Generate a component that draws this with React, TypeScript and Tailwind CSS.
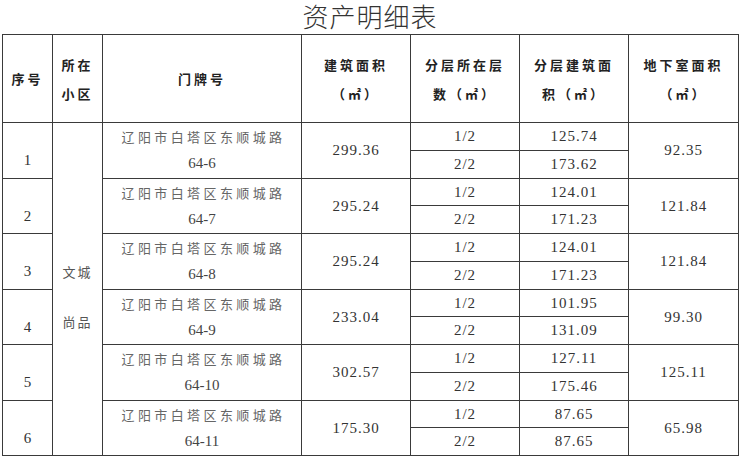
import React from 'react';

const rows = [
  { no: '1', door: '64-6', area: '299.36', f1: '125.74', f2: '173.62', base: '92.35' },
  { no: '2', door: '64-7', area: '295.24', f1: '124.01', f2: '171.23', base: '121.84' },
  { no: '3', door: '64-8', area: '295.24', f1: '124.01', f2: '171.23', base: '121.84' },
  { no: '4', door: '64-9', area: '233.04', f1: '101.95', f2: '131.09', base: '99.30' },
  { no: '5', door: '64-10', area: '302.57', f1: '127.11', f2: '175.46', base: '125.11' },
  { no: '6', door: '64-11', area: '175.30', f1: '87.65', f2: '87.65', base: '65.98' },
];

const cjk = '"Noto Sans CJK SC", sans-serif';
const num = '"Liberation Serif", "Noto Sans CJK SC", serif';

export default function App() {
  const cell = 'border border-[#3a3a3a] text-center align-middle p-0';
  const numCell = `${cell} text-[15px] text-[#333] tracking-[1px]`;

  return (
    <div className="w-[740px] h-[457px] bg-white overflow-hidden">
      <div
        className="h-[34px] pt-[1px] text-center text-[26px] leading-[30px] text-[#333] tracking-[1px] font-light"
        style={{ fontFamily: cjk }}
      >
        资产明细表
      </div>
      <table className="ml-[2px] w-[736px] border-collapse table-fixed" style={{ fontFamily: cjk }}>
        <colgroup>
          <col className="w-[50px]" />
          <col className="w-[50px]" />
          <col className="w-[199px]" />
          <col className="w-[109px]" />
          <col className="w-[109px]" />
          <col className="w-[109px]" />
          <col className="w-[110px]" />
        </colgroup>
        <thead>
          <tr className="h-[88px] text-[13px] font-bold text-[#222] leading-[29px]">
            <th className={`${cell} tracking-[3px]`}>序号</th>
            <th className={`${cell} tracking-[3px]`}>所在<br />小区</th>
            <th className={`${cell} tracking-[3px]`}>门牌号</th>
            <th className={`${cell} tracking-[3px]`}>建筑面积<br />（㎡）</th>
            <th className={`${cell} tracking-[3px]`}>分层所在层<br />数（㎡）</th>
            <th className={`${cell} tracking-[3px]`}>分层建筑面<br />积（㎡）</th>
            <th className={`${cell} tracking-[3px]`}>地下室面积<br />（㎡）</th>
          </tr>
        </thead>
        <tbody>
          {rows.map((r, i) => (
            <React.Fragment key={r.no}>
              <tr className="h-[27.75px]">
                <td rowSpan={2} className={`${cell} text-[15px] text-[#333] pt-[20px]`} style={{ fontFamily: num }}>
                  {r.no}
                </td>
                {i === 0 && (
                  <td rowSpan={12} className={`${cell} text-[13px] text-[#555] tracking-[2px] leading-[50px] pt-[16px]`}>
                    文城<br />尚品
                  </td>
                )}
                <td rowSpan={2} className={`${cell} text-[13px] text-[#666] leading-[26px]`}>
                  <div className="tracking-[3.4px] pl-[3px]">辽阳市白塔区东顺城路</div>
                  <div className="text-[15px] text-[#444]" style={{ fontFamily: num }}>{r.door}</div>
                </td>
                <td rowSpan={2} className={numCell} style={{ fontFamily: num }}>{r.area}</td>
                <td className={numCell} style={{ fontFamily: num }}>1/2</td>
                <td className={numCell} style={{ fontFamily: num }}>{r.f1}</td>
                <td rowSpan={2} className={numCell} style={{ fontFamily: num }}>{r.base}</td>
              </tr>
              <tr className="h-[27.75px]">
                <td className={numCell} style={{ fontFamily: num }}>2/2</td>
                <td className={numCell} style={{ fontFamily: num }}>{r.f2}</td>
              </tr>
            </React.Fragment>
          ))}
        </tbody>
      </table>
    </div>
  );
}
